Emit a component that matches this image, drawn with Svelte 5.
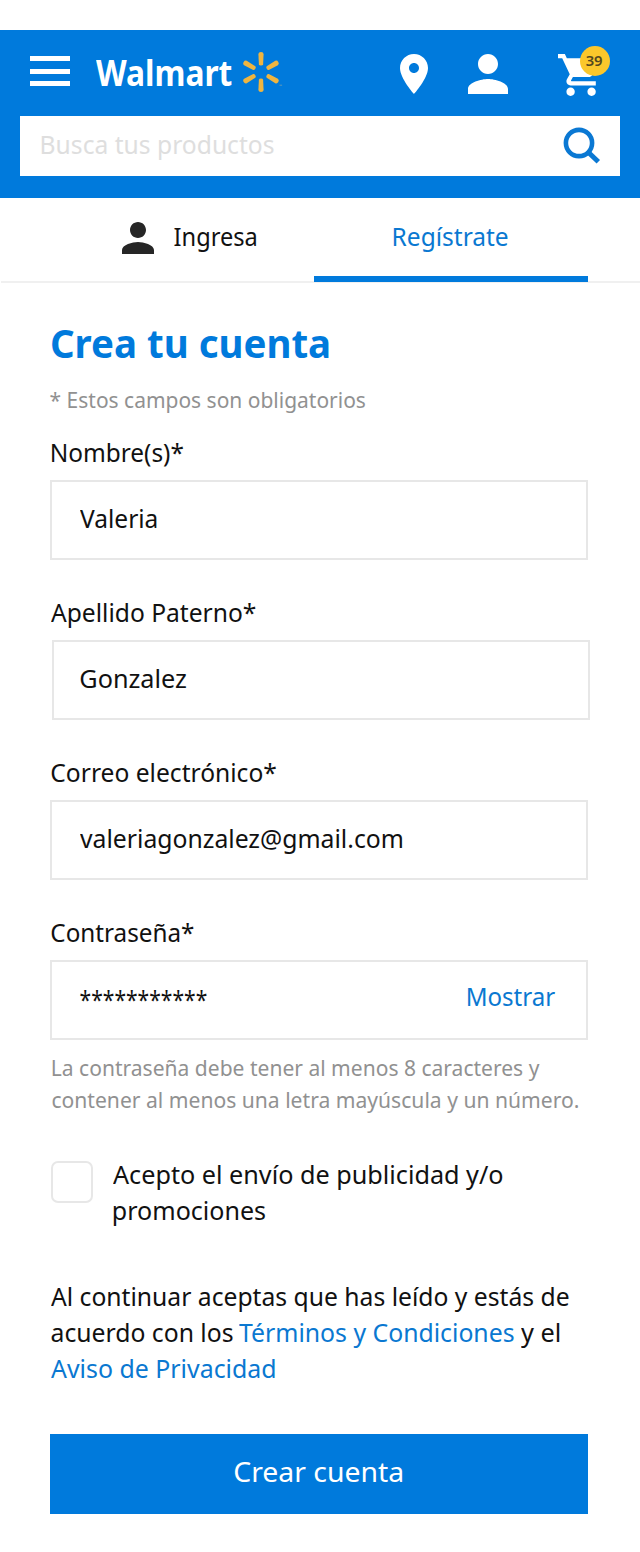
<script>
  const fields = [
    { label: 'Nombre(s)*', labelWidth: 132, value: 'Valeria', valueWidth: 76.5 },
    { label: 'Apellido Paterno*', labelWidth: 204.5, value: 'Gonzalez', valueWidth: 106, shifted: true },
    { label: 'Correo electrónico*', labelWidth: 225, value: 'valeriagonzalez@gmail.com', valueWidth: 322 },
    { label: 'Contraseña*', labelWidth: 142.5, value: '***********', valueWidth: 126.5, secret: true }
  ];
  const rays = [0, 60, 120, 180, 240, 300];

  // Condenses a line of text so that its visible glyphs span the given width.
  // Bounds are measured at a multiple of the font size for sub-pixel precision;
  function fit(node, width) {
    const style = getComputedStyle(node);
    const ctx = document.createElement('canvas').getContext('2d');
    const zoom = 16;
    ctx.font = `${style.fontWeight} ${parseFloat(style.fontSize) * zoom}px ${style.fontFamily}`;
    const m = ctx.measureText(node.textContent);
    const left = (m.actualBoundingBoxLeft / zoom) * 0.6;
    const right = m.actualBoundingBoxRight / zoom;
    const scale = width / (left + right);
    node.style.transform = `translateX(${left * scale}px) scaleX(${scale})`;
  }
</script>

{#snippet line(text, width)}<span class="line" use:fit={width}>{text}</span>{/snippet}

{#snippet person(cls)}
  <svg class={cls} viewBox="4 4 16 16" fill="currentColor"><path d="M12 12c2.21 0 4-1.79 4-4s-1.79-4-4-4-4 1.79-4 4 1.79 4 4 4zm0 2c-2.67 0-8 1.34-8 4v2h16v-2c0-2.66-5.33-4-8-4z" /></svg>
{/snippet}

<div class="page">
  <header>
    <div class="bar">
      <div class="menu"><i></i><i></i><i></i></div>
      <div class="brand">{@render line('Walmart', 135.5)}</div>
      <svg class="spark" width="42" height="42" viewBox="-20 -21 42 42">
        {#each rays as angle}
          <path transform="rotate({angle})" fill="#efb540" d="M-2.6-18Q-2.4-20 0-20T2.6-18L2.1-7.8Q1.9-6.6 0-6.6T-2.1-7.8Z" />
        {/each}
        <path d="M18.5 13.2h2.6" stroke="#5f98b8" stroke-width="1" />
      </svg>
      <svg class="pin" viewBox="5 2 14 20" fill="#fff"><path d="M12 2C8.13 2 5 5.13 5 9c0 5.25 7 13 7 13s7-7.75 7-13c0-3.87-3.13-7-7-7zm0 9.5c-1.38 0-2.5-1.12-2.5-2.5s1.12-2.5 2.5-2.5 2.5 1.12 2.5 2.5-1.12 2.5-2.5 2.5z" /></svg>
      {@render person('account')}
      <div class="cart">
        <svg viewBox="1 2 21 20" width="44.1" height="42" fill="#fff"><path d="M7 18c-1.1 0-1.99.9-1.99 2S5.9 22 7 22s2-.9 2-2-.9-2-2-2zM1 2v2h2l3.6 7.59-1.35 2.45c-.16.28-.25.61-.25.96 0 1.1.9 2 2 2h12v-2H7.42c-.14 0-.25-.11-.25-.25l.03-.12.9-1.63h7.45c.75 0 1.41-.41 1.75-1.03l3.58-6.49c.08-.14.12-.31.12-.48 0-.55-.45-1-1-1H5.21l-.94-2H1zm16 16c-1.1 0-1.99.9-1.99 2s.89 2 1.99 2 2-.9 2-2-.9-2-2-2z" /></svg>
        <div class="badge">{@render line('39', 16)}</div>
      </div>
    </div>
    <div class="search">
      {@render line('Busca tus productos', 232.5)}
      <svg width="38" height="38" viewBox="0 0 38 38" fill="none" stroke="#0a78d3"><circle cx="16" cy="16" r="13.1" stroke-width="4.6" /><path d="M25.5 25.5L35.3 34.8" stroke-width="5" /></svg>
    </div>
  </header>

  <nav>
    <div class="tab login">{@render person('user')}{@render line('Ingresa', 82)}</div>
    <div class="tab active">{@render line('Regístrate', 114.5)}</div>
  </nav>

  <main>
    <h1>{@render line('Crea tu cuenta', 277.5)}</h1>
    <p class="hint">{@render line('* Estos campos son obligatorios', 315)}</p>

    {#each fields as field}
      <div class="field">
        <div class="label">{@render line(field.label, field.labelWidth)}</div>
        <div class="box" class:shifted={field.shifted} class:secret={field.secret}>
          {@render line(field.value, field.valueWidth)}
          {#if field.secret}<div class="show">{@render line('Mostrar', 88)}</div>{/if}
        </div>
      </div>
    {/each}

    <div class="help">
      {@render line('La contraseña debe tener al menos 8 caracteres y', 487.5)}
      {@render line('contener al menos una letra mayúscula y un número.', 526)}
    </div>

    <div class="promo">
      <div class="check"></div>
      <div class="lines">
        {@render line('Acepto el envío de publicidad y/o', 389.5)}
        {@render line('promociones', 152)}
      </div>
    </div>

    <div class="terms">
      <div class="row">{@render line('Al continuar aceptas que has leído y estás de', 517.5)}</div>
      <div class="row mixed">
        {@render line('acuerdo con los', 181.5)}
        <a>{@render line('Términos y Condiciones', 274.5)}</a>
        {@render line('y el', 38.5)}
      </div>
      <div class="row"><a>{@render line('Aviso de Privacidad', 223.5)}</a></div>
    </div>

    <button>{@render line('Crear cuenta', 168)}</button>
  </main>
</div>

<style>
  :global(body) { background: #fff; }
  .page {
    width: 640px;
    height: 1552px;
    padding-top: 30px;
    box-sizing: border-box;
    overflow: hidden;
    background: #fff;
    color: #111;
    font: 26px/36px "Noto Sans", "Open Sans", sans-serif;
  }
  svg { display: block; flex: none; }
  .line { display: block; width: max-content; white-space: nowrap; transform-origin: 0 50%; }

  header { height: 168px; background: #007adc; color: #fff; }
  .bar { display: flex; height: 86px; align-items: flex-start; }
  .menu { display: flex; flex-direction: column; gap: 7.5px; width: 40px; margin: 26px 0 0 30px; }
  .menu i { height: 5px; background: #fff; }
  .brand { width: 136px; margin: 19px 0 0 26px; font-size: 35px; line-height: 47px; font-weight: 700; }
  .spark { margin: 21px 0 0 8.5px; }
  .pin { width: 28px; height: 40px; margin: 24px 0 0 117.5px; }
  .account { width: 40px; height: 40px; margin: 24px 0 0 40px; }
  .cart { position: relative; margin: 24px 0 0 50px; }
  .badge {
    position: absolute; left: 22px; top: -8px; width: 30px; height: 30px;
    box-sizing: border-box; padding: 5px 0 0 6px; border-radius: 50%;
    background: #fbc72b; color: #54471f; font-size: 14px; line-height: 20px; font-weight: 600;
  }
  .search {
    display: flex; justify-content: space-between; height: 60px; margin: 0 20px;
    padding: 10px 19px 0 21px; box-sizing: border-box; background: #fff; color: #dedede;
  }
  .search svg { margin: 1px 0 0; }

  nav { display: flex; height: 85px; box-sizing: border-box; margin-left: 1px; border-bottom: 2px solid #f0f0f0; }
  .tab { height: 84px; box-sizing: border-box; padding-top: 20px; }
  .login { display: flex; width: 313px; padding-left: 121px; gap: 20px; }
  .user { width: 32px; height: 32px; margin-top: 4px; color: #262626; }
  .active { width: 274px; padding-left: 79px; border-bottom: 6px solid #007adc; color: #0a78d1; }

  main { padding: 35px 52px 0 50px; }
  h1 { margin: 0; padding-left: .5px; color: #007adc; font-size: 40px; line-height: 50px; font-weight: 700; }
  .hint { margin: 15px 0 19px; color: #919191; font-size: 22px; line-height: 32px; }
  .field { height: 126px; margin-bottom: 34px; }
  .label { padding-left: .5px; }
  .box {
    display: flex; justify-content: space-between; height: 80px; margin-top: 10px; box-sizing: border-box;
    border: 2px solid #e7e7e7; padding: 18px 30px 0 28px;
  }
  .shifted { margin-left: 2px; margin-right: -2px; padding-left: 26px; }
  .secret { padding-top: 19px; }
  .show { width: 89px; margin-top: -3px; color: #0a78d1; }
  .help { margin-top: -23px; padding-left: 2px; color: #919191; font-size: 22px; line-height: 32px; }
  .promo { display: flex; gap: 19.5px; margin-top: 41px; padding-left: 1px; }
  .check { width: 42px; height: 42px; margin-top: 5px; box-sizing: border-box; border: 2px solid #e7e7e7; border-radius: 7px; }
  .terms { margin-top: 50px; padding-left: .5px; }
  .mixed { display: grid; grid-template-columns: 188px 282px 60px; }
  a { color: #0a78d1; }
  button {
    display: block; width: 538px; height: 80px; margin: 48px 0 0; padding: 0 0 6px 184px; border: 0;
    background: #007adc; color: #fff; font: 28px/40px "Noto Sans", "Open Sans", sans-serif; text-align: left;
  }
</style>
